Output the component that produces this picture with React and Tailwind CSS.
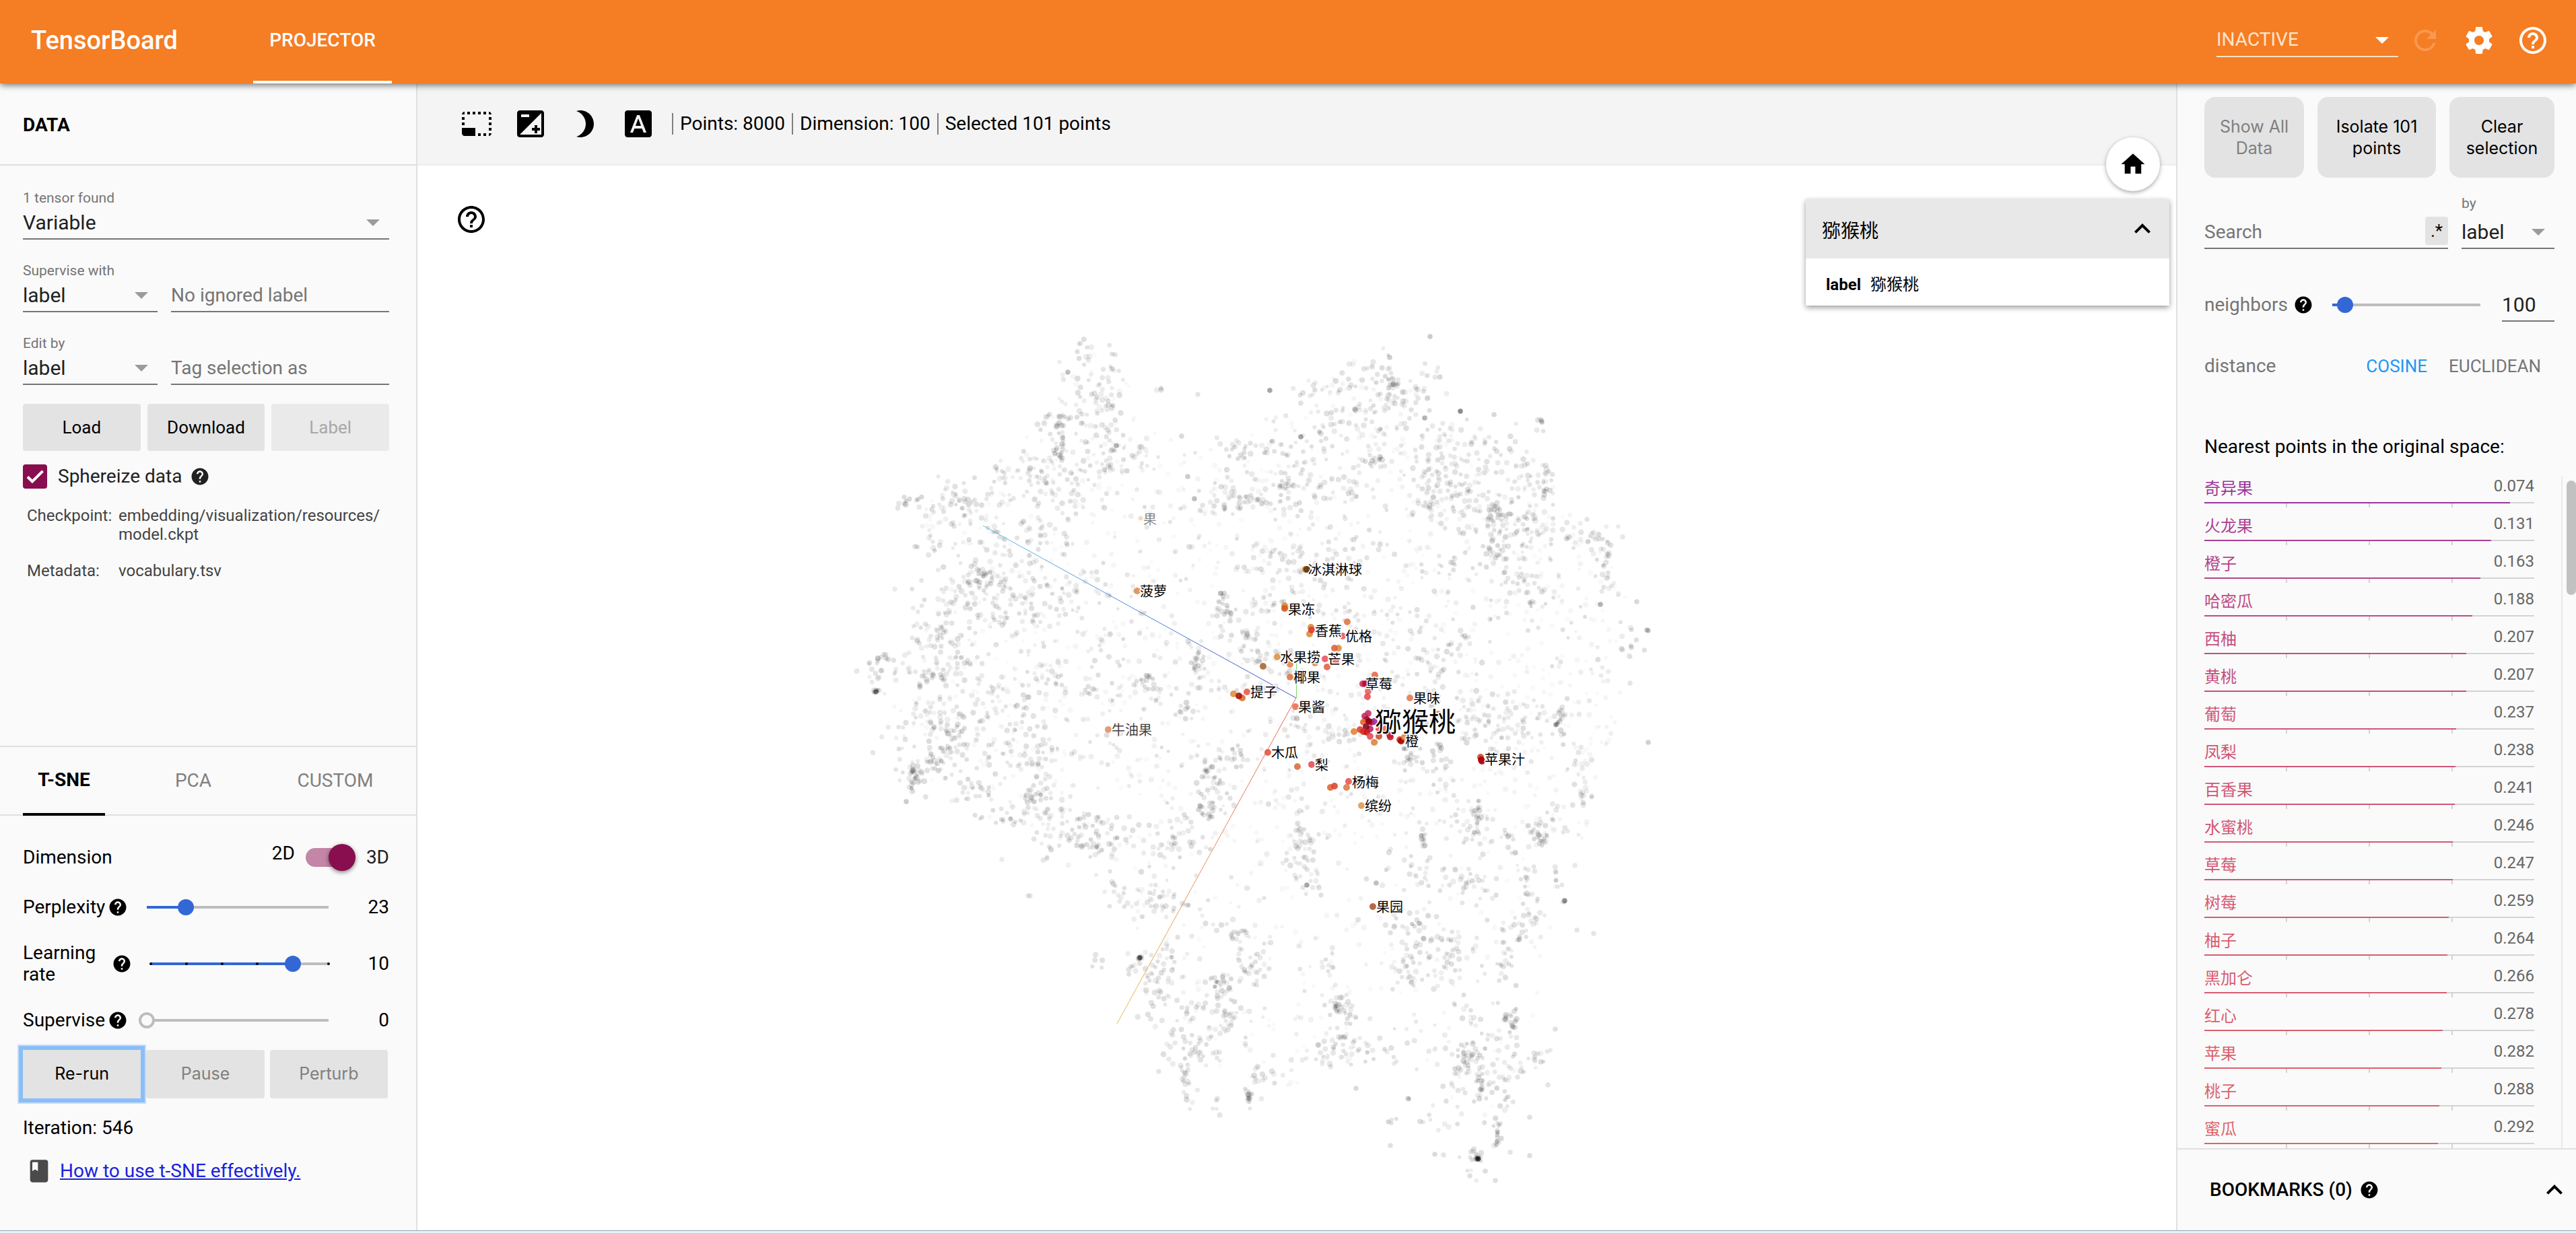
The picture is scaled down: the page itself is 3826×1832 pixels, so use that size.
import React from "react";

const ICONS = {
  help: "M12 2C6.48 2 2 6.48 2 12s4.48 10 10 10 10-4.48 10-10S17.52 2 12 2zm1 17h-2v-2h2v2zm2.07-7.75l-.9.92C13.45 12.9 13 13.5 13 15h-2v-.5c0-1.1.45-2.1 1.17-2.83l1.24-1.26c.37-.36.59-.86.59-1.41 0-1.1-.9-2-2-2s-2 .9-2 2H8c0-2.21 1.79-4 4-4s4 1.79 4 4c0 .88-.36 1.68-.93 2.25z",
  helpOutline:
    "M11 18h2v-2h-2v2zm1-16C6.48 2 2 6.48 2 12s4.48 10 10 10 10-4.48 10-10S17.52 2 12 2zm0 18c-4.41 0-8-3.59-8-8s3.59-8 8-8 8 3.59 8 8-3.59 8-8 8zm0-14c-2.21 0-4 1.79-4 4h2c0-1.1.9-2 2-2s2 .9 2 2c0 2-3 1.75-3 5h2c0-2.25 3-2.5 3-5 0-2.21-1.79-4-4-4z",
  refresh:
    "M17.65 6.35C16.2 4.9 14.21 4 12 4c-4.42 0-7.99 3.58-7.99 8s3.57 8 7.99 8c3.73 0 6.84-2.55 7.73-6h-2.08c-.82 2.33-3.04 4-5.65 4-3.31 0-6-2.69-6-6s2.69-6 6-6c1.66 0 3.14.69 4.22 1.78L13 11h7V4l-2.35 2.35z",
  settings:
    "M19.43 12.98c.04-.32.07-.64.07-.98s-.03-.66-.07-.98l2.11-1.65c.19-.15.24-.42.12-.64l-2-3.46c-.12-.22-.39-.3-.61-.22l-2.49 1c-.52-.4-1.08-.73-1.69-.98l-.38-2.65C14.46 2.18 14.25 2 14 2h-4c-.25 0-.46.18-.49.42l-.38 2.65c-.61.25-1.17.59-1.69.98l-2.49-1c-.23-.09-.49 0-.61.22l-2 3.46c-.13.22-.07.49.12.64l2.11 1.65c-.04.32-.07.65-.07.98s.03.66.07.98l-2.11 1.65c-.19.15-.24.42-.12.64l2 3.46c.12.22.39.3.61.22l2.49-1c.52.4 1.08.73 1.69.98l.38 2.65c.03.24.24.42.49.42h4c.25 0 .46-.18.49-.42l.38-2.65c.61-.25 1.17-.59 1.69-.98l2.49 1c.23.09.49 0 .61-.22l2-3.46c.12-.22.07-.49-.12-.64l-2.11-1.65zM12 15.5c-1.93 0-3.5-1.57-3.5-3.5s1.57-3.5 3.5-3.5 3.5 1.57 3.5 3.5-1.57 3.5-3.5 3.5z",
  select:
    "M23 15h-2v2h2v-2zm0-4h-2v2h2v-2zm0 8h-2v2c1 0 2-1 2-2zM15 3h-2v2h2V3zm8 4h-2v2h2V7zm-2-4v2h2c0-1-1-2-2-2zM3 21h8v-6H1v4c0 1.1.9 2 2 2zM3 7H1v2h2V7zm12 12h-2v2h2v-2zm4-16h-2v2h2V3zm0 16h-2v2h2v-2zM3 3C2 3 1 4 1 5h2V3zm0 8H1v2h2v-2zm8-8H9v2h2V3zM7 3H5v2h2V3z",
  exposure:
    "M15 17v2h2v-2h2v-2h-2v-2h-2v2h-2v2h2zm5-15H4c-1.1 0-2 .9-2 2v16c0 1.1.9 2 2 2h16c1.1 0 2-.9 2-2V4c0-1.1-.9-2-2-2zM5 5h6v2H5V5zm15 15H4L20 4v16z",
  moon: "M9 2c-1.05 0-2.05.16-3 .46 4.06 1.27 7 5.06 7 9.54 0 4.48-2.94 8.27-7 9.54.95.3 1.95.46 3 .46 5.52 0 10-4.48 10-10S14.52 2 9 2z",
  labels:
    "M9.93 13.5h4.14L12 7.98zM20 2H4c-1.1 0-2 .9-2 2v16c0 1.1.9 2 2 2h16c1.1 0 2-.9 2-2V4c0-1.1-.9-2-2-2zm-4.05 16.5l-1.14-3H9.17l-1.12 3H5.96l5.11-13h1.86l5.11 13h-2.09z",
  home: "M10 20v-6h4v6h5v-8h3L12 3 2 12h3v8z",
  up: "M12 8l-6 6 1.41 1.41L12 10.83l4.59 4.58L18 14z",
  book: "M18 2H6c-1.1 0-2 .9-2 2v16c0 1.1.9 2 2 2h12c1.1 0 2-.9 2-2V4c0-1.1-.9-2-2-2zM6 4h5v8l-2.5-1.5L6 12V4z",
  check: "M9 16.17L4.83 12l-1.42 1.41L9 19 21 7l-1.41-1.41z",
};

function Icon({ name, className = "" }) {
  return (
    <svg viewBox="0 0 24 24" fill="currentColor" fillRule="evenodd" aria-hidden="true" className={`shrink-0 ${className}`}>
      <path d={ICONS[name]} />
    </svg>
  );
}

function Arrow({ className }) {
  return (
    <svg viewBox="0 0 20 10" fill="currentColor" aria-hidden="true" className={`pointer-events-none absolute h-[10px] w-[20px] ${className}`}>
      <path d="M0 0h20L10 10z" />
    </svg>
  );
}

function SelectBox({ id, label, value }) {
  return (
    <div className="relative">
      <select id={id} aria-label={label} defaultValue={value} className="block h-12 w-full appearance-none bg-transparent text-[30px] text-[#212121] outline-none">
        <option>{value}</option>
      </select>
      <div className="h-[2px] bg-[#757575]" />
      <Arrow className="top-5 right-[14px] text-[#9b9b9b]" />
    </div>
  );
}

function Field({ id, label, value, className = "" }) {
  return (
    <div className={className}>
      <label htmlFor={id} className="block h-6 text-[21px] leading-6 text-[#757575]">
        {label}
      </label>
      <SelectBox id={id} label={label} value={value} />
    </div>
  );
}

function TextField({ label, className = "" }) {
  return (
    <div className={className}>
      <input
        type="text"
        aria-label={label}
        placeholder={label}
        className="block h-12 w-full bg-transparent text-[28px] text-[#212121] outline-none placeholder:text-[#757575]"
      />
      <div className="h-[2px] bg-[#757575]" />
    </div>
  );
}

function Slider({ id, label, min, max, value, ticks = 0, className = "" }) {
  const pct = ((value - min) / (max - min)) * 100;
  const empty = pct === 0;
  return (
    <div className={`relative h-6 ${className}`}>
      <div className="flex h-full items-center">
        <div className="h-1 w-full bg-[#bdbdbd]">
          <div className="h-full bg-[#3367d6]" style={{ width: `${pct}%` }} />
        </div>
      </div>
      {ticks > 0 && (
        <div className="absolute inset-y-0 -inset-x-[2px] flex items-center justify-between">
          {Array.from({ length: ticks }, (_, i) => (
            <span key={i} className="size-1 rounded-full bg-black" />
          ))}
        </div>
      )}
      <div className="absolute inset-y-0 -inset-x-3">
        <input
          id={id}
          type="range"
          aria-label={label}
          min={min}
          max={max}
          defaultValue={value}
          className={
            "block h-6 w-full appearance-none bg-transparent outline-none [&::-webkit-slider-thumb]:size-6 [&::-webkit-slider-thumb]:appearance-none [&::-webkit-slider-thumb]:rounded-full " +
            (empty
              ? "[&::-webkit-slider-thumb]:border-4 [&::-webkit-slider-thumb]:border-solid [&::-webkit-slider-thumb]:border-[#bdbdbd] [&::-webkit-slider-thumb]:bg-[#fafafa]"
              : "[&::-webkit-slider-thumb]:bg-[#3367d6]")
          }
        />
      </div>
    </div>
  );
}

function GreyButton({ children, disabled, className = "" }) {
  return (
    <button type="button" disabled={disabled} className={`bg-[#e3e3e3] ${disabled ? "text-[#808080]" : "text-black"} ${className}`}>
      {children}
    </button>
  );
}

function Header() {
  return (
    <header className="relative z-20 flex h-[124px] shrink-0 items-center bg-[#f57d23] text-white shadow-[0_2px_10px_rgba(0,0,0,0.6)]">
      <h1 className="w-[376px] pb-1 pl-[46px] text-[38px] font-medium">TensorBoard</h1>
      <button type="button" className="h-full w-[206px] border-b-4 border-white text-[28px] font-medium">
        PROJECTOR
      </button>
      <div className="ml-auto flex items-center pr-10 pb-1">
        <div className="relative mr-4 w-[270px]">
          <select aria-label="Dashboards" defaultValue="INACTIVE" className="block h-12 w-full appearance-none bg-transparent text-[28px] text-[#fde4cc] outline-none">
            <option>INACTIVE</option>
          </select>
          <div className="h-[2px] bg-[#fde0c4]" />
          <Arrow className="top-5 right-[14px] text-white" />
        </div>
        <div className="flex gap-8">
          <button type="button" aria-label="Reload" disabled className="text-[#f8994f]">
            <Icon name="refresh" className="size-12" />
          </button>
          <button type="button" aria-label="Settings">
            <Icon name="settings" className="size-12" />
          </button>
          <button type="button" aria-label="Help">
            <Icon name="helpOutline" className="size-12" />
          </button>
        </div>
      </div>
    </header>
  );
}

function ParamRow({ id, label, display, wrap, ...slider }) {
  return (
    <div className={`flex items-center ${wrap ? "h-16" : "h-10"}`}>
      <div className="flex w-[184px] shrink-0 items-center gap-1">
        <label htmlFor={id} className={`leading-8 ${wrap ? "w-32" : ""}`}>
          {label}
        </label>
        <Icon name="help" className="size-[30px]" />
      </div>
      <div className={`flex-1 ${wrap ? "pl-[6px]" : ""}`}>
        <Slider id={id} {...slider} />
      </div>
      <output htmlFor={id} className="w-[90px] text-right">
        {display}
      </output>
    </div>
  );
}

function LeftPanel() {
  return (
    <aside className="flex w-[620px] shrink-0 flex-col border-r-2 border-[#e0e0e0] bg-[#fafafa]">
      <div className="flex h-[122px] shrink-0 items-center border-b-2 border-[#e0e0e0] px-[34px] pt-1">
        <h2 className="text-[28px] font-bold">DATA</h2>
      </div>
      <div className="px-[34px] pt-9 pr-10">
        <Field id="tensor" label="1 tensor found" value="Variable" />
        <div className="mt-[34px] flex items-end gap-5">
          <Field id="supervise-with" label="Supervise with" value="label" className="w-[200px]" />
          <TextField label="No ignored label" className="flex-1" />
        </div>
        <div className="mt-[34px] flex items-end gap-5">
          <Field id="edit-by" label="Edit by" value="label" className="w-[200px]" />
          <TextField label="Tag selection as" className="flex-1" />
        </div>
        <div className="mt-7 grid grid-cols-3 gap-[10px] text-[26px]">
          <GreyButton className="h-[70px] rounded">Load</GreyButton>
          <GreyButton className="h-[70px] rounded">Download</GreyButton>
          <button type="button" disabled className="h-[70px] rounded bg-[#eaeaea] text-[#a8a8a8]">
            Label
          </button>
        </div>
        <div className="mt-5 flex h-9 items-center text-[28px] text-[#212121]">
          <label className="flex items-center gap-4">
            <span className="relative block size-9">
              <input type="checkbox" defaultChecked className="block size-9 appearance-none rounded bg-[#880e4f]" />
              <Icon name="check" className="pointer-events-none absolute inset-[2px] size-8 stroke-white stroke-1 text-white" />
            </span>
            Sphereize data
          </label>
          <Icon name="help" className="ml-3 size-[30px]" />
        </div>
        <dl className="mt-[26px] grid grid-cols-[136px_1fr] gap-y-[26px] pl-[6px] text-[24px] leading-7 text-[#444444]">
          <dt>Checkpoint:</dt>
          <dd>
            embedding/visualization/resources/
            <wbr />
            model.ckpt
          </dd>
          <dt>Metadata:</dt>
          <dd>vocabulary.tsv</dd>
        </dl>
      </div>

      <section className="mt-auto border-t-2 border-[#e0e0e0] text-[28px] text-black">
        <div className="flex h-[102px] justify-between border-b-2 border-[#e0e0e0] pr-10 pl-[34px]">
          <button type="button" className="-mb-[2px] w-[122px] border-b-4 border-black font-bold">
            T-SNE
          </button>
          <button type="button" className="px-6 text-[#808080]">
            PCA
          </button>
          <button type="button" className="w-40 text-[#808080]">
            CUSTOM
          </button>
        </div>
        <div className="pt-[42px] pr-10 pb-[68px] pl-[34px]">
          <div className="flex h-10 items-center">
            <span>Dimension</span>
            <span className="ml-auto self-start leading-7">2D</span>
            <label className="ml-4 flex items-center gap-4 text-[#212121]">
              <span className="relative flex h-10 w-[74px] items-center">
                <span className="h-7 w-[72px] rounded-full bg-[#c386a7]" />
                <input
                  type="checkbox"
                  role="switch"
                  defaultChecked
                  className="absolute top-0 right-0 size-10 appearance-none rounded-full bg-[#880e4f] shadow-[0_2px_6px_rgba(0,0,0,0.5)]"
                />
              </span>
              3D
            </label>
          </div>
          <div className="mt-[34px] flex flex-col gap-8">
            <ParamRow id="perplexity" label="Perplexity" display="23" min={2} max={100} value={23} />
            <ParamRow id="learning-rate" label="Learning rate" display="10" wrap min={-3} max={2} value={1} ticks={6} />
            <ParamRow id="supervise" label="Supervise" display="0" min={0} max={100} value={0} />
          </div>
          <div className="mt-6 grid grid-cols-3 gap-2 pr-[2px] font-['Inter'] text-[25px]">
            <GreyButton className="relative h-[72px] shadow-[0_0_0_6px_#8abef8,0_0_0_8px_#c4def9]">Re-run</GreyButton>
            <GreyButton disabled className="h-[72px] rounded">
              Pause
            </GreyButton>
            <GreyButton disabled className="h-[72px] rounded">
              Perturb
            </GreyButton>
          </div>
          <p className="mt-7 h-8 leading-8">Iteration: 546</p>
          <div className="mt-7 flex h-10 items-center gap-[11px] pl-1">
            <Icon name="book" className="size-10 text-[#4a4a4a]" />
            <a href="#tsne" className="text-[#1a22dd] underline">
              How to use t-SNE effectively.
            </a>
          </div>
        </div>
      </section>
    </aside>
  );
}

/* ---- point cloud ---- */

function makeRandom(seed) {
  let s = seed;
  return () => {
    s = (s + 0x6d2b79f5) | 0;
    let t = Math.imul(s ^ (s >>> 15), 1 | s);
    t = (t + Math.imul(t ^ (t >>> 7), 61 | t)) ^ t;
    return ((t ^ (t >>> 14)) >>> 0) / 4294967296;
  };
}

// Outline that the faint background points stay inside.
const OUTLINE = [
  [1610, 510], [1680, 560], [1720, 640], [1840, 650], [1960, 570], [2060, 500], [2130, 560], [2200, 640], [2300, 680],
  [2310, 740], [2390, 800], [2430, 930], [2420, 1020], [2380, 1130], [2360, 1220], [2330, 1330], [2290, 1420], [2290, 1560],
  [2250, 1640], [2190, 1680], [2080, 1600], [1990, 1580], [1870, 1640], [1770, 1620], [1710, 1530], [1690, 1440], [1650, 1330],
  [1530, 1250], [1430, 1200], [1350, 1160], [1330, 1080], [1300, 1020], [1340, 960], [1410, 860], [1370, 790], [1355, 750],
  [1480, 710], [1560, 600],
];

// Clusters: centre x, centre y, spread x, spread y, count, weight (1 = light, 2 = dark).
const CLUSTERS = [
  [1612, 518, 10, 8, 8, 1], [1651, 549, 8, 18, 12, 1], [1608, 589, 14, 26, 22, 1], [1640, 598, 10, 16, 14, 1], [1727, 567, 6, 8, 3, 1],
  [1557, 630, 9, 9, 8, 1], [1575, 650, 4, 18, 18, 2], [1576, 679, 7, 12, 14, 1], [1616, 625, 8, 20, 14, 1], [1655, 655, 8, 16, 14, 1],
  [1687, 679, 10, 8, 9, 1], [1655, 690, 14, 8, 14, 1], [1533, 697, 14, 10, 20, 1], [1489, 701, 7, 7, 7, 1], [1560, 705, 8, 12, 10, 1],
  [1608, 723, 14, 18, 22, 1], [1537, 737, 22, 20, 32, 1], [1418, 728, 16, 10, 14, 1], [1355, 748, 10, 6, 10, 2], [1410, 746, 18, 7, 16, 1],
  [1430, 768, 9, 14, 14, 1], [1375, 798, 14, 10, 9, 1], [1497, 799, 14, 12, 16, 1], [1560, 795, 12, 12, 14, 1], [1450, 857, 14, 20, 30, 2],
  [1489, 866, 14, 18, 24, 1], [1402, 862, 14, 14, 12, 1], [1418, 897, 12, 14, 14, 1], [1462, 906, 16, 14, 20, 1], [1505, 893, 14, 14, 14, 1],
  [1560, 902, 16, 16, 14, 1], [1576, 875, 20, 8, 14, 1], [1624, 871, 14, 10, 10, 1], [1371, 933, 10, 16, 14, 1], [1402, 942, 14, 10, 16, 1],
  [1402, 969, 14, 10, 16, 1], [1323, 982, 14, 9, 14, 1], [1300, 1000, 7, 12, 12, 1], [1300, 1027, 4, 4, 6, 2], [1371, 1009, 18, 9, 16, 1],
  [1412, 1016, 14, 14, 16, 1], [1473, 1036, 14, 12, 14, 1], [1553, 1018, 20, 10, 12, 1], [1640, 1022, 26, 6, 20, 1], [1703, 1009, 6, 10, 12, 2],
  [1371, 1067, 16, 10, 12, 1], [1410, 1076, 14, 12, 14, 1], [1327, 1098, 8, 9, 8, 1], [1402, 1107, 14, 14, 26, 2], [1406, 1125, 12, 14, 20, 1],
  [1355, 1147, 10, 12, 12, 1], [1489, 1125, 16, 14, 14, 1], [1537, 1130, 16, 20, 20, 1], [1600, 1112, 20, 8, 8, 1], [1500, 1075, 20, 20, 14, 1],
  [2067, 567, 9, 10, 26, 2], [2030, 555, 10, 10, 10, 1], [2122, 560, 10, 10, 12, 1], [1956, 574, 14, 7, 12, 1], [2003, 607, 14, 18, 20, 1],
  [2090, 598, 16, 14, 24, 1], [1972, 634, 14, 10, 14, 1], [2043, 639, 20, 16, 20, 1], [2154, 661, 16, 12, 18, 1], [2209, 661, 14, 12, 14, 1],
  [2249, 672, 12, 9, 10, 1], [2288, 627, 5, 8, 6, 2], [2043, 681, 8, 6, 14, 2], [2098, 674, 20, 14, 20, 1], [2011, 723, 10, 16, 16, 1],
  [2122, 719, 12, 16, 20, 1], [2154, 714, 14, 16, 26, 1], [2209, 710, 16, 16, 18, 1], [2264, 719, 14, 16, 24, 1], [2296, 722, 7, 20, 16, 2],
  [1908, 719, 6, 12, 12, 2], [1845, 668, 12, 7, 14, 2], [1888, 665, 12, 7, 9, 1], [1932, 674, 16, 14, 18, 1], [1861, 723, 16, 14, 14, 1],
  [1814, 742, 20, 9, 18, 1], [1837, 748, 12, 8, 14, 2], [1893, 750, 16, 10, 14, 1], [1948, 728, 14, 18, 22, 1], [2221, 764, 9, 10, 22, 2],
  [2190, 775, 14, 12, 14, 1], [2169, 746, 9, 16, 16, 1], [2249, 790, 14, 16, 26, 1], [2280, 780, 12, 10, 14, 1], [2325, 799, 20, 6, 18, 1],
  [2367, 790, 12, 9, 14, 1], [2391, 813, 6, 14, 8, 1], [2383, 848, 7, 14, 16, 1], [2225, 822, 9, 18, 20, 2], [2264, 862, 14, 20, 22, 1],
  [2280, 905, 10, 18, 14, 1], [2177, 839, 22, 20, 20, 1], [2114, 755, 10, 16, 16, 1], [2019, 831, 20, 14, 18, 1], [1932, 826, 24, 10, 18, 1],
  [1885, 825, 14, 10, 12, 1], [1821, 906, 7, 13, 20, 2], [1861, 929, 22, 18, 34, 1], [1915, 880, 28, 18, 22, 1], [2010, 925, 14, 9, 8, 1],
  [1880, 985, 18, 12, 16, 1], [1900, 1003, 12, 12, 12, 1], [2169, 955, 8, 10, 10, 2], [2110, 940, 30, 20, 16, 1], [2316, 1075, 5, 16, 26, 2],
  [2225, 1085, 12, 18, 26, 1], [2190, 1072, 14, 16, 18, 1], [2264, 1063, 14, 16, 20, 1], [2418, 945, 8, 12, 7, 1], [2351, 1125, 6, 16, 10, 1],
  [2102, 1125, 12, 12, 20, 2], [2140, 1140, 6, 18, 16, 2], [1778, 991, 5, 12, 16, 2], [1760, 1022, 16, 4, 10, 1], [1762, 1050, 8, 8, 8, 2],
  [1837, 1121, 12, 9, 14, 2], [1920, 1080, 12, 14, 14, 1], [1985, 1095, 16, 6, 12, 1], [2140, 1000, 24, 24, 22, 1], [2060, 985, 20, 20, 14, 1],
  [2130, 1030, 22, 18, 16, 1], [1355, 1160, 4, 12, 18, 2], [1375, 1140, 10, 7, 10, 1], [1450, 1174, 12, 9, 14, 2], [1497, 1216, 18, 6, 14, 2],
  [1440, 1186, 8, 8, 6, 1], [1541, 1158, 9, 22, 26, 1], [1545, 1195, 12, 10, 14, 1], [1568, 1225, 12, 10, 14, 1], [1620, 1220, 12, 6, 14, 2],
  [1624, 1256, 14, 9, 22, 2], [1590, 1245, 20, 6, 10, 1], [1687, 1247, 20, 14, 24, 1], [1750, 1256, 14, 7, 16, 1], [1766, 1238, 7, 14, 10, 1],
  [1560, 1262, 6, 12, 8, 1], [1795, 1140, 10, 12, 16, 2], [1806, 1172, 12, 12, 22, 2], [1790, 1200, 9, 10, 18, 2], [1932, 1216, 4, 22, 18, 1],
  [1948, 1250, 10, 6, 9, 1], [1924, 1276, 16, 7, 14, 1], [1940, 1314, 9, 10, 14, 1], [2114, 1243, 3, 7, 12, 2], [2193, 1212, 6, 16, 20, 2],
  [2175, 1230, 12, 10, 12, 1], [2241, 1247, 14, 8, 12, 1], [2288, 1243, 9, 8, 18, 2], [2300, 1215, 14, 12, 14, 1], [2347, 1180, 7, 7, 14, 1],
  [2312, 1305, 5, 7, 5, 1], [2324, 1338, 2, 2, 3, 2], [2272, 1332, 6, 20, 18, 1], [2264, 1368, 9, 12, 14, 1], [2201, 1319, 10, 16, 14, 1],
  [2162, 1301, 10, 10, 14, 1], [2090, 1292, 18, 12, 22, 1], [1663, 1319, 12, 10, 12, 1], [1700, 1324, 14, 6, 8, 1], [1720, 1340, 20, 14, 18, 1],
  [1815, 1380, 10, 5, 10, 1], [1847, 1390, 16, 8, 16, 1], [2106, 1372, 18, 10, 22, 1], [2169, 1421, 20, 14, 28, 1], [2106, 1412, 18, 14, 26, 1],
  [2098, 1453, 14, 10, 22, 1], [2233, 1430, 4, 12, 8, 1], [2249, 1404, 6, 14, 8, 1], [1734, 1412, 10, 12, 14, 1], [1723, 1453, 12, 10, 20, 1],
  [1687, 1435, 10, 8, 12, 1], [1693, 1423, 2, 2, 5, 2], [1632, 1436, 4, 6, 5, 1], [1814, 1457, 8, 8, 16, 2], [1861, 1433, 9, 9, 16, 1],
  [1814, 1483, 6, 10, 12, 1], [1845, 1450, 14, 6, 12, 1], [1778, 1497, 9, 8, 14, 1], [1829, 1506, 10, 5, 12, 1], [1713, 1500, 10, 12, 14, 1],
  [1984, 1493, 5, 8, 12, 2], [2003, 1497, 8, 10, 14, 1], [1972, 1435, 7, 9, 9, 1], [1988, 1529, 12, 14, 18, 1], [1980, 1560, 10, 9, 14, 1],
  [2010, 1545, 16, 16, 14, 1], [1968, 1580, 12, 6, 7, 1], [1766, 1558, 14, 12, 24, 1], [1760, 1595, 4, 14, 16, 2], [1790, 1565, 6, 10, 8, 1],
  [1766, 1642, 4, 4, 3, 1], [1808, 1643, 3, 6, 5, 1], [1857, 1629, 3, 9, 14, 2], [1869, 1597, 10, 8, 14, 1], [1814, 1537, 7, 12, 10, 1],
  [2193, 1497, 10, 9, 8, 1], [2245, 1520, 8, 8, 15, 2], [2177, 1564, 10, 9, 20, 2], [2201, 1582, 16, 14, 22, 1], [2197, 1609, 6, 14, 20, 2],
  [2241, 1580, 14, 20, 18, 1], [2288, 1573, 6, 14, 8, 1], [2225, 1685, 4, 10, 18, 2], [2195, 1721, 2, 2, 12, 2], [2188, 1722, 9, 10, 14, 1],
  [2154, 1636, 16, 16, 16, 1], [2241, 1631, 9, 10, 12, 1], [2067, 1662, 5, 4, 5, 1], [2122, 1667, 5, 3, 3, 1], [2092, 1632, 1, 1, 2, 1],
  [2160, 1540, 30, 26, 24, 1], [2070, 1560, 24, 16, 10, 1], [1490, 960, 60, 50, 60, 1], [1640, 950, 70, 50, 30, 1], [1460, 1060, 60, 40, 50, 1],
];

// Isolated points: x, y, opacity.
const SINGLES = [
  [2124, 500, 0.2], [2064, 531, 0.2], [1586, 553, 0.25], [1886, 580, 0.35], [1779, 586, 0.1], [1932, 599, 0.12], [2169, 611, 0.45],
  [2116, 621, 0.3], [2219, 616, 0.15], [1932, 649, 0.35], [1658, 662, 0.3], [1755, 648, 0.15], [1764, 708, 0.2], [1774, 741, 0.25],
  [2446, 936, 0.2], [2448, 937, 0.2], [2423, 962, 0.15], [2431, 894, 0.15], [2421, 1015, 0.1], [2448, 1103, 0.18], [1301, 1028, 0.45],
  [1346, 1191, 0.2], [1488, 1277, 0.08], [1527, 1331, 0.09], [1530, 1331, 0.09], [2342, 1382, 0.1], [2367, 1387, 0.1], [1693, 1423, 0.4],
  [1721, 1592, 0.1], [2014, 1617, 0.14], [2091, 1632, 0.15], [2272, 1660, 0.12], [2065, 1702, 0.12], [2131, 1715, 0.14], [2144, 1716, 0.1],
  [2272, 1717, 0.13], [2243, 1712, 0.1], [2206, 1740, 0.13], [2183, 1747, 0.12], [2221, 1754, 0.12], [2195, 1722, 0.5], [2310, 1529, 0.12],
  [2299, 1612, 0.1], [1941, 1315, 0.35], [2044, 1312, 0.25], [2377, 898, 0.3], [2324, 1338, 0.3],
];

function inside(x, y) {
  let hit = false;
  for (let i = 0, j = OUTLINE.length - 1; i < OUTLINE.length; j = i++) {
    const [xi, yi] = OUTLINE[i];
    const [xj, yj] = OUTLINE[j];
    if (yi > y !== yj > y && x < ((xj - xi) * (y - yi)) / (yj - yi) + xi) hit = !hit;
  }
  return hit;
}

function buildCloud() {
  const rnd = makeRandom(546);
  const normal = () => rnd() + rnd() + rnd() + rnd() - 2;
  const points = [];
  while (points.length < 2100) {
    const x = 1290 + rnd() * 1160;
    const y = 500 + rnd() * 1200;
    // The lower third of the cloud is thinner than the rest.
    if (!inside(x, y) || (y > 1250 && rnd() < 0.5)) continue;
    points.push([x, y, 2.4 + rnd() * 1.8, 0.02 + rnd() * rnd() * 0.13]);
  }
  CLUSTERS.forEach(([cx, cy, sx, sy, n, w]) => {
    const spread = w === 2 ? 1.8 : 2.4;
    for (let i = 0; i < n; i++) {
      points.push([
        cx + normal() * sx * spread,
        cy + normal() * sy * spread,
        2.8 + rnd() * 1.6,
        (0.06 + rnd() * 0.07) * (w === 2 ? 1.2 : 1),
      ]);
    }
  });
  SINGLES.forEach(([x, y, o]) => points.push([x, y, 3.8, o]));
  return points;
}

const CLOUD = buildCloud();

const HITS = [
  [1939, 846, "#c27d2c"], [1941, 846, "#5c3a10"], [1908, 900, "#dd8a3c"], [1908, 904, "#cf5a1c"], [1947, 932, "#d98b3c"], [1945, 942, "#dd8f40"],
  [1948, 936, "#e03c30"], [2001, 924, "#e07844"], [1994, 945, "#e85858"], [1988, 963, "#dd9044"], [1982, 963, "#e0643c"], [1897, 976, "#dd9648"],
  [1916, 987, "#e4824c"], [1876, 990, "#a8682c"], [1916, 1006, "#e07444"], [1968, 979, "#e85464"], [1984, 982, "#e85c5c"], [1971, 991, "#e8604c"],
  [1953, 985, "#e4844c"], [1852, 1028, "#e85c50"], [1832, 1031, "#dd9040"], [1845, 1037, "#d8742c"], [1840, 1034, "#a81408"], [2042, 1003, "#e46c48"],
  [2024, 1016, "#d03060"], [2028, 1016, "#b80c28"], [2032, 1027, "#e86450"], [2031, 1035, "#e84c58"], [1924, 1050, "#e8704c"], [2094, 1037, "#e47c50"],
  [2032, 1060, "#c83064"], [2027, 1064, "#c42c68"], [2030, 1069, "#a80c38"], [2025, 1073, "#e0642c"], [2037, 1073, "#c80c14"], [2041, 1072, "#a030a0"],
  [2033, 1072, "#8c0010"], [2035, 1083, "#b02870"], [2029, 1080, "#900024"], [2020, 1084, "#dc4034"], [2025, 1087, "#d03018"], [2011, 1087, "#e08438"],
  [2030, 1088, "#c81818"], [2035, 1094, "#e44c54"], [2041, 1103, "#dd8440"], [2048, 1083, "#e44848"], [2058, 1083, "#e46050"], [2048, 1094, "#c85434"],
  [2064, 1092, "#cc3050"], [2065, 1095, "#c81c2c"], [2079, 1099, "#e03c28"], [2081, 1101, "#a80400"], [2086, 1095, "#dd8c40"], [2136, 1061, "#e08c48"],
  [1883, 1118, "#e0583c"], [1927, 1139, "#e06c44"], [1948, 1136, "#e85050"], [1976, 1170, "#e06838"], [1982, 1168, "#dc4834"], [2000, 1170, "#e07c48"],
  [2003, 1161, "#e85454"], [2022, 1197, "#dd9c50"], [2199, 1125, "#d84428"], [2200, 1129, "#a00000"], [2201, 1131, "#b00808"], [2039, 1347, "#b05830"],
  [1689, 878, "#e08c54"], [1646, 1084, "#e09068"],
];

const LABELS = [
  ["果", 1698, 771, 0.45], ["冰淇淋球", 1943, 846, 1], ["菠萝", 1693, 878, 1], ["果冻", 1913, 905, 1], ["香蕉", 1953, 937, 1], ["优格", 1998, 945, 1],
  ["水果捞", 1901, 976, 1], ["芒果", 1972, 979, 1], ["椰果", 1921, 1006, 1], ["草莓", 2028, 1016, 1], ["提子", 1857, 1028, 1], ["果酱", 1928, 1050, 1],
  ["果味", 2099, 1037, 1], ["橙", 2087, 1101, 1], ["木瓜", 1888, 1118, 1], ["梨", 1953, 1136, 1], ["杨梅", 2008, 1162, 1], ["缤纷", 2027, 1197, 1],
  ["苹果汁", 2205, 1128, 1], ["牛油果", 1651, 1084, 0.75], ["果园", 2044, 1347, 1],
];

function Scatter() {
  return (
    <svg viewBox="620 246 2612 1582" className="absolute inset-0 size-full" role="img" aria-label="Embedding point cloud">
      <defs>
        <linearGradient id="axis-z" gradientUnits="userSpaceOnUse" x1="1460" y1="781" x2="1925" y2="1037">
          <stop offset="0" stopColor="#5cc0e8" />
          <stop offset="1" stopColor="#4848c8" />
        </linearGradient>
        <linearGradient id="axis-x" gradientUnits="userSpaceOnUse" x1="1925" y1="1037" x2="1659" y2="1521">
          <stop offset="0" stopColor="#e46060" />
          <stop offset="1" stopColor="#e8bc50" />
        </linearGradient>
      </defs>
      <g>
        {CLOUD.map(([x, y, r, o], i) => (
          <circle key={i} cx={x.toFixed(1)} cy={y.toFixed(1)} r={r.toFixed(1)} fillOpacity={o.toFixed(3)} />
        ))}
      </g>
      <path d="M1460 781L1925 1037" stroke="url(#axis-z)" strokeWidth="1" />
      <path d="M1925 1037L1659 1521" stroke="url(#axis-x)" strokeWidth="1" />
      <path d="M1925.5 1037V980" stroke="#78dc60" strokeWidth="1" />
      <circle cx="1694" cy="770" r="3.5" fill="#f4dcc4" />
      {HITS.map(([x, y, c], i) => (
        <circle key={i} cx={x} cy={y} r="5" fill={c} fillOpacity="0.9" />
      ))}
      <g fontFamily="'Noto Sans CJK SC', sans-serif" stroke="#ffffff" strokeWidth="3" strokeLinejoin="round" paintOrder="stroke">
        {LABELS.map(([t, x, y, o]) => (
          <text key={t} x={x} y={y + 8} fontSize="20" opacity={o}>
            {t}
          </text>
        ))}
        <text x="2042" y="1087" fontSize="40">
          猕猴桃
        </text>
      </g>
    </svg>
  );
}

function Center() {
  return (
    <main className="flex min-w-0 flex-1 flex-col bg-white">
      <div className="flex h-[122px] shrink-0 items-center border-b-2 border-[#eeeeee] bg-[#f4f4f4] pl-16 text-[28px]">
        <div className="flex gap-8">
          <button type="button" aria-label="Bounding box selection">
            <Icon name="select" className="size-12" />
          </button>
          <button type="button" aria-label="Edit tool">
            <Icon name="exposure" className="size-12" />
          </button>
          <button type="button" aria-label="Night mode">
            <Icon name="moon" className="size-12" />
          </button>
          <button type="button" aria-label="3D labels mode">
            <Icon name="labels" className="size-12" />
          </button>
        </div>
        <div className="ml-[26px] flex gap-[10px] leading-8">
          <span className="border-l-2 border-[#808080] pl-[10px]">Points: 8000</span>
          <span className="border-l-2 border-[#808080] pl-[10px]">Dimension: 100</span>
          <span className="border-l-2 border-[#808080] pl-[10px]">Selected 101 points</span>
        </div>
      </div>
      <div className="relative flex-1">
        <Scatter />
        <button type="button" aria-label="Help" className="absolute top-14 left-14">
          <Icon name="helpOutline" className="size-12" />
        </button>
        <button
          type="button"
          aria-label="Reset view"
          className="absolute -top-[42px] right-6 flex size-20 items-center justify-center rounded-full bg-white shadow-[0_2px_6px_rgba(0,0,0,0.35)]"
        >
          <Icon name="home" className="size-[42px]" />
        </button>
        <section className="absolute top-[50px] right-[10px] w-[540px] bg-white shadow-[0_3px_8px_rgba(0,0,0,0.4)]">
          <div className="flex h-[88px] items-center justify-between bg-[#e8e8e8] pr-4 pl-6">
            <h3 className="pt-2 text-[28px]">猕猴桃</h3>
            <button type="button" aria-label="Collapse">
              <Icon name="up" className="size-12" />
            </button>
          </div>
          <dl className="flex h-[70px] items-center gap-[14px] pt-2 pl-[30px] text-[24px]">
            <dt className="font-bold">label</dt>
            <dd>猕猴桃</dd>
          </dl>
        </section>
      </div>
    </main>
  );
}

const NEIGHBORS = [
  ["奇异果", "0.074", "#9c349c"], ["火龙果", "0.131", "#ad3e92"], ["橙子", "0.163", "#b5438a"], ["哈密瓜", "0.188", "#be4a83"],
  ["西柚", "0.207", "#c54f7e"], ["黄桃", "0.207", "#c54f7e"], ["葡萄", "0.237", "#cf5676"], ["凤梨", "0.238", "#cf5676"],
  ["百香果", "0.241", "#d05775"], ["水蜜桃", "0.246", "#d25874"], ["草莓", "0.247", "#d25874"], ["树莓", "0.259", "#d65b71"],
  ["柚子", "0.264", "#d75c70"], ["黑加仑", "0.266", "#d75d6f"], ["红心", "0.278", "#da606c"], ["苹果", "0.282", "#db616b"],
  ["桃子", "0.288", "#dc636a"], ["蜜瓜", "0.292", "#dd6469"],
];

function RightPanel() {
  return (
    <aside className="flex w-[594px] shrink-0 flex-col border-l-2 border-[#e0e0e0] bg-[#fafafa] text-[28px] text-[#757575]">
      <div className="shrink-0 pt-5 pr-8 pl-10">
        <div className="grid h-[120px] grid-cols-[148fr_176fr_156fr] gap-5 font-['Inter'] text-[25px] leading-8">
          <GreyButton disabled className="rounded-2xl px-5">
            Show All Data
          </GreyButton>
          <GreyButton className="rounded-2xl px-5">Isolate 101 points</GreyButton>
          <GreyButton className="rounded-2xl px-5">Clear selection</GreyButton>
        </div>
        <div className="mt-[26px] flex items-end gap-5">
          <div className="relative flex-1">
            <TextField label="Search" />
            <button type="button" aria-label="Regular expression" className="absolute top-[2px] right-0 h-[42px] w-[34px] rounded bg-[#e3e3e3] text-[26px] text-black">
              .*
            </button>
          </div>
          <div className="w-[138px]">
            <label htmlFor="search-by" className="mb-[6px] block h-6 text-[21px] leading-6">
              by
            </label>
            <SelectBox id="search-by" label="by" value="label" />
          </div>
        </div>
        <div className="mt-[58px] flex items-center">
          <label htmlFor="neighbors">neighbors</label>
          <Icon name="help" className="ml-2 size-[30px] text-black" />
          <Slider id="neighbors" min={5} max={999} value={90} className="ml-7 flex-1" />
          <div className="ml-8 w-[78px]">
            <input type="text" aria-label="Number of neighbors" defaultValue="100" className="block h-12 w-full bg-transparent text-[30px] text-[#212121] outline-none" />
            <div className="h-[2px] bg-[#757575]" />
          </div>
        </div>
        <div className="mt-[46px] flex h-10 items-center">
          <span>distance</span>
          <div className="ml-auto flex gap-8 pr-5 text-[26px]">
            <button type="button" className="text-[#2196f3]">
              COSINE
            </button>
            <button type="button">EUCLIDEAN</button>
          </div>
        </div>
        <p className="mt-[84px] leading-8 text-black">Nearest points in the original space:</p>
      </div>

      <div className="mt-7 flex min-h-0 flex-1 basis-0 overflow-hidden pl-10">
        <ul className="mr-10 flex-1 text-[24px]">
          {NEIGHBORS.map(([name, dist, color]) => (
            <li key={name} className="h-14">
              <div className="flex h-[38px] items-start justify-between">
                <a href="#point" className="leading-9" style={{ color }}>
                  {name}
                </a>
                <span className="leading-7 text-[#666666]">{dist}</span>
              </div>
              <div className="h-[2px] bg-[#d3d3d3]">
                <div className="h-full" style={{ width: `${(1 - Number(dist)) * 100}%`, backgroundColor: color }} />
              </div>
              <div className="flex h-[6px] justify-evenly">
                <span className="w-[2px] bg-[#d3d3d3]" />
                <span className="w-[2px] bg-[#d3d3d3]" />
                <span className="w-[2px] bg-[#d3d3d3]" />
              </div>
            </li>
          ))}
        </ul>
        <div className="flex w-[22px] justify-end border-l-2 border-[#e8e8e8] pt-[6px]">
          <div className="h-[170px] w-[14px] rounded-full bg-[#c1c1c1]" />
        </div>
      </div>

      <div className="flex h-[122px] shrink-0 items-center border-t-2 border-[#e0e0e0] pr-2 pl-12 text-black">
        <h2 className="font-medium">BOOKMARKS (0)</h2>
        <Icon name="help" className="ml-[10px] size-[30px]" />
        <button type="button" aria-label="Expand bookmarks" className="ml-auto">
          <Icon name="up" className="size-12" />
        </button>
      </div>
    </aside>
  );
}

export default function App() {
  return (
    <div className="flex h-screen flex-col overflow-hidden bg-white font-['Roboto','Noto_Sans_CJK_SC',sans-serif] text-black">
      <Header />
      <div className="flex min-h-0 flex-1">
        <LeftPanel />
        <Center />
        <RightPanel />
      </div>
      <div className="h-1 shrink-0 border-t border-[#94a5ad] bg-[#e6f3fb]" />
    </div>
  );
}
